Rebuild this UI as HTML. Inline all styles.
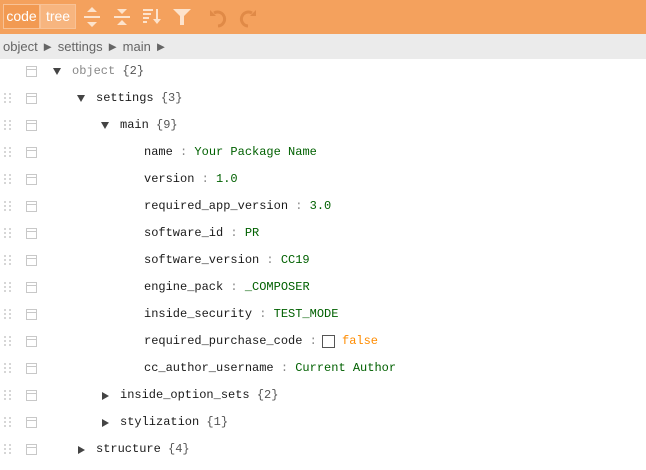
<!DOCTYPE html>
<html><head><style>
*{margin:0;padding:0;box-sizing:border-box}
body{width:646px;height:470px;background:#fff;overflow:hidden;font-family:"Liberation Sans",Arial,sans-serif}
.tb{position:absolute;left:0;top:0;width:646px;height:34px;background:#f4a15d}
.btn{position:absolute;top:4px;height:25px;color:#fff;font-size:14px;line-height:23px;text-align:center;border:1px solid #f8c296}
.ic{position:absolute;top:6px}
.bc{position:absolute;left:0;top:34px;width:646px;height:25px;background:#ebebeb;color:#656565;font-size:13px;line-height:25px;padding-left:3px}
.row{position:absolute;left:0;height:27px;width:646px;font-family:"Liberation Mono",monospace;font-size:12px;line-height:27px;color:#1a1a1a}
.dr{position:absolute;left:4px;top:8px;width:9px;height:11px;background:linear-gradient(90deg,#d6d6d6 2px,transparent 2px) 0 0/5px 4px,transparent;-webkit-mask:linear-gradient(#000 2px,transparent 2px) 0 0/5px 4px;mask:linear-gradient(#000 2px,transparent 2px) 0 0/5px 4px}
.cm{position:absolute;left:26px;top:8px;width:11px;height:11px;border:1px solid #c8c8c8}
.cm:after{content:"";position:absolute;left:0;top:2px;width:9px;height:1px;background:#c8c8c8}
.t{position:absolute}
.ar{position:absolute;top:9px}
.s{color:#006000}.n{color:#006000}.b{color:#ff8c00}.c{color:#888}.br{color:#555}
</style></head><body>
<div class="tb">
<div class="btn" style="left:3px;width:37px;background:#f29a52">code</div>
<div class="btn" style="left:40px;width:36px;background:#f7b57f">tree</div>
<svg class="ic" style="left:83px" width="18" height="22" viewBox="0 0 18 22" fill="#fde3cc"><rect x="1" y="10" width="16" height="2"/><path d="M9 1l5 5H4z M9 21l5-5H4z"/></svg>
<svg class="ic" style="left:113px" width="18" height="22" viewBox="0 0 18 22" fill="#fde3cc"><rect x="1" y="10" width="16" height="2"/><path d="M9 8l5-5H4z M9 14l5 5H4z"/></svg>
<svg class="ic" style="left:142px" width="20" height="22" viewBox="0 0 20 22" fill="#fde3cc"><rect x="1" y="3" width="10" height="2"/><rect x="1" y="7" width="8" height="2"/><rect x="1" y="11" width="6" height="2"/><rect x="1" y="15" width="4" height="2"/><rect x="14" y="3" width="2" height="12"/><path d="M11 13h8l-4 5z"/></svg>
<svg class="ic" style="left:172px" width="20" height="22" viewBox="0 0 20 22" fill="#fde3cc"><path d="M1 3h18l-7 7v9h-4v-9z"/></svg>
<svg class="ic" style="left:207px" width="22" height="22" viewBox="0 0 22 22" fill="none" stroke="#e08a47" stroke-width="3"><path d="M7 7a7 7 0 1 1 4 13"/><path d="M3 4v6h6" stroke-width="0" fill="#e08a47"/></svg>
<svg class="ic" style="left:237px" width="22" height="22" viewBox="0 0 22 22" fill="none" stroke="#e08a47" stroke-width="3"><path d="M15 7a7 7 0 1 0-4 13"/><path d="M19 4v6h-6" stroke-width="0" fill="#e08a47"/></svg>
</div>
<div class="bc">object ► settings ► main ►</div>

<div class="row" style="top:58px"><div class="cm"></div><svg class="ar" style="left:52px" width="10" height="9"><path d="M1 1h8l-4 7z" fill="#444"/></svg><span class="t" style="left:72px"><span class="c">object</span> <span class="br">{2}</span></span></div>
<div class="row" style="top:85px"><div class="dr"></div><div class="cm"></div><svg class="ar" style="left:76px" width="10" height="9"><path d="M1 1h8l-4 7z" fill="#444"/></svg><span class="t" style="left:96px">settings <span class="br">{3}</span></span></div>
<div class="row" style="top:112px"><div class="dr"></div><div class="cm"></div><svg class="ar" style="left:100px" width="10" height="9"><path d="M1 1h8l-4 7z" fill="#444"/></svg><span class="t" style="left:120px">main <span class="br">{9}</span></span></div>
<div class="row" style="top:139px"><div class="dr"></div><div class="cm"></div><span class="t" style="left:144px">name <span class="c">:</span> <span class="s">Your Package Name</span></span></div>
<div class="row" style="top:166px"><div class="dr"></div><div class="cm"></div><span class="t" style="left:144px">version <span class="c">:</span> <span class="n">1.0</span></span></div>
<div class="row" style="top:193px"><div class="dr"></div><div class="cm"></div><span class="t" style="left:144px">required_app_version <span class="c">:</span> <span class="n">3.0</span></span></div>
<div class="row" style="top:220px"><div class="dr"></div><div class="cm"></div><span class="t" style="left:144px">software_id <span class="c">:</span> <span class="s">PR</span></span></div>
<div class="row" style="top:247px"><div class="dr"></div><div class="cm"></div><span class="t" style="left:144px">software_version <span class="c">:</span> <span class="s">CC19</span></span></div>
<div class="row" style="top:274px"><div class="dr"></div><div class="cm"></div><span class="t" style="left:144px">engine_pack <span class="c">:</span> <span class="s">_COMPOSER</span></span></div>
<div class="row" style="top:301px"><div class="dr"></div><div class="cm"></div><span class="t" style="left:144px">inside_security <span class="c">:</span> <span class="s">TEST_MODE</span></span></div>
<div class="row" style="top:328px"><div class="dr"></div><div class="cm"></div><span class="t" style="left:144px">required_purchase_code <span class="c">:</span></span><span style="position:absolute;left:322px;top:7px;width:13px;height:13px;border:1px solid #555"></span><span class="t b" style="left:342px">false</span></div>
<div class="row" style="top:355px"><div class="dr"></div><div class="cm"></div><span class="t" style="left:144px">cc_author_username <span class="c">:</span> <span class="s">Current Author</span></span></div>
<div class="row" style="top:382px"><div class="dr"></div><div class="cm"></div><svg class="ar" style="left:101px" width="9" height="10"><path d="M1 1v8l7-4z" fill="#444"/></svg><span class="t" style="left:120px">inside_option_sets <span class="br">{2}</span></span></div>
<div class="row" style="top:409px"><div class="dr"></div><div class="cm"></div><svg class="ar" style="left:101px" width="9" height="10"><path d="M1 1v8l7-4z" fill="#444"/></svg><span class="t" style="left:120px">stylization <span class="br">{1}</span></span></div>
<div class="row" style="top:436px"><div class="dr"></div><div class="cm"></div><svg class="ar" style="left:77px" width="9" height="10"><path d="M1 1v8l7-4z" fill="#444"/></svg><span class="t" style="left:96px">structure <span class="br">{4}</span></span></div>
</body></html>
